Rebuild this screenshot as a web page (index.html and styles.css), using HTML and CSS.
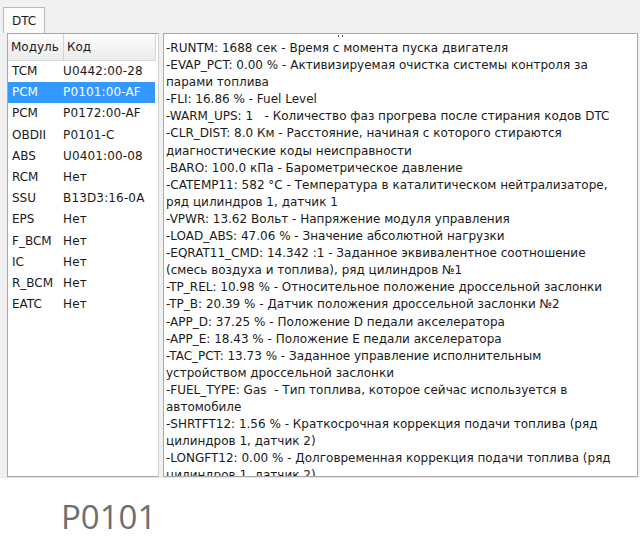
FILE: index.html
```html
<!DOCTYPE html>
<html lang="ru">
<head>
<meta charset="utf-8">
<title>DTC</title>
<link rel="stylesheet" href="styles.css">
</head>
<body>
<div class="window">
  <div class="tabs"><div class="tab">DTC</div></div>
  <div class="panes">
    <div class="list">
      <div class="list-head">
        <div class="col-mod">Модуль</div>
        <div class="col-code">Код</div>
      </div>
      <div class="row"><span class="c1">TCM</span><span class="c2">U0442:00-28</span></div>
      <div class="row selected"><span class="c1">PCM</span><span class="c2">P0101:00-AF</span></div>
      <div class="row"><span class="c1">PCM</span><span class="c2">P0172:00-AF</span></div>
      <div class="row"><span class="c1">OBDII</span><span class="c2">P0101-C</span></div>
      <div class="row"><span class="c1">ABS</span><span class="c2">U0401:00-08</span></div>
      <div class="row"><span class="c1">RCM</span><span class="c2">Нет</span></div>
      <div class="row"><span class="c1">SSU</span><span class="c2">B13D3:16-0A</span></div>
      <div class="row"><span class="c1">EPS</span><span class="c2">Нет</span></div>
      <div class="row"><span class="c1">F_BCM</span><span class="c2">Нет</span></div>
      <div class="row"><span class="c1">IC</span><span class="c2">Нет</span></div>
      <div class="row"><span class="c1">R_BCM</span><span class="c2">Нет</span></div>
      <div class="row"><span class="c1">EATC</span><span class="c2">Нет</span></div>
    </div>
    <div class="info">
      <div class="mark"><i></i><i></i></div>
      <div class="line">-RUNTM: 1688 сек - Время с момента пуска двигателя</div>
      <div class="line">-EVAP_PCT: 0.00 % - Активизируемая очистка системы контроля за<br>парами топлива</div>
      <div class="line">-FLI: 16.86 % - Fuel Level</div>
      <div class="line">-WARM_UPS: 1&nbsp;&nbsp;&nbsp;- Количество фаз прогрева после стирания кодов DTC</div>
      <div class="line">-CLR_DIST: 8.0 Км - Расстояние, начиная с которого стираются<br>диагностические коды неисправности</div>
      <div class="line">-BARO: 100.0 кПа - Барометрическое давление</div>
      <div class="line">-CATEMP11: 582 °C - Температура в каталитическом нейтрализаторе,<br>ряд цилиндров 1, датчик 1</div>
      <div class="line">-VPWR: 13.62 Вольт - Напряжение модуля управления</div>
      <div class="line">-LOAD_ABS: 47.06 % - Значение абсолютной нагрузки</div>
      <div class="line">-EQRAT11_CMD: 14.342 :1 - Заданное эквивалентное соотношение<br>(смесь воздуха и топлива), ряд цилиндров №1</div>
      <div class="line">-TP_REL: 10.98 % - Относительное положение дроссельной заслонки</div>
      <div class="line">-TP_B: 20.39 % - Датчик положения дроссельной заслонки №2</div>
      <div class="line">-APP_D: 37.25 % - Положение D педали акселератора</div>
      <div class="line">-APP_E: 18.43 % - Положение E педали акселератора</div>
      <div class="line">-TAC_PCT: 13.73 % - Заданное управление исполнительным<br>устройством дроссельной заслонки</div>
      <div class="line">-FUEL_TYPE: Gas&nbsp;&nbsp;- Тип топлива, которое сейчас используется в<br>автомобиле</div>
      <div class="line">-SHRTFT12: 1.56 % - Краткосрочная коррекция подачи топлива (ряд<br>цилиндров 1, датчик 2)</div>
      <div class="line">-LONGFT12: 0.00 % - Долговременная коррекция подачи топлива (ряд<br>цилиндров 1, датчик 2)</div>
    </div>
  </div>
</div>
<div class="caption">P0101</div>
</body>
</html>
```
FILE: styles.css
```css
html, body {
  margin: 0;
  padding: 0;
  background: #ffffff;
}
body {
  width: 640px;
  height: 550px;
  overflow: hidden;
  font-family: Tahoma, "DejaVu Sans", sans-serif;
  color: #1a1a1a;
}
.window {
  background: #f1f1f1;
  height: 478px;
  padding-top: 6px;
  box-sizing: border-box;
  border-bottom: 1px solid #e6e6e6;
}
.tabs {
  height: 27px;
  padding-left: 3px;
  display: flex;
  align-items: flex-end;
}
.tab {
  height: 26px;
  box-sizing: border-box;
  padding: 6px 8px 0 8px;
  background: #fbfbfb;
  border: 1px solid #b9b9b9;
  border-bottom: none;
  font-size: 12px;
}
.panes {
  display: flex;
  gap: 4px;
  padding: 0 2px 0 7px;
  height: 444px;
}
.list {
  width: 152px;
  flex: none;
  background: #fff;
  border: 1px solid #a9a9a9;
  border-right-color: #d0d0d0;
  box-sizing: border-box;
  font-size: 12px;
}
.list-head {
  display: flex;
  height: 26px;
  margin-right: 2px;
  background: linear-gradient(#fcfcfc, #ececec);
  border-bottom: 1px solid #d5d5d5;
}
.col-mod {
  width: 52px;
  padding-left: 3px;
  line-height: 26px;
  border-right: 1px solid #d5d5d5;
}
.col-code {
  flex: 1;
  padding-left: 3px;
  line-height: 26px;
  border-right: 1px solid #d5d5d5;
}
.row {
  display: flex;
  height: 21.2px;
  line-height: 21.2px;
  margin-right: 3px;
}
.row .c1 {
  width: 51px;
  padding-left: 4px;
  flex: none;
}
.row .c2 {
  padding-left: 0;
  white-space: nowrap;
  letter-spacing: 0.15px;
}
.row.selected {
  background: #3399ff;
  color: #fff;
}
.info {
  flex: 1;
  position: relative;
  background: #fff;
  border: 1px solid #a9a9a9;
  box-sizing: border-box;
  padding: 6px 0 0 2px;
  overflow: hidden;
  font-size: 12px;
  line-height: 17.1px;
}
.mark {
  position: absolute;
  left: 174px;
  top: 1px;
  display: flex;
  gap: 3px;
}
.mark i {
  display: block;
  width: 1px;
  height: 2px;
  background: #444;
}
.line {
  white-space: nowrap;
}
.caption {
  padding: 22px 0 0 61px;
  font-family: "Open Sans", sans-serif;
  font-size: 33px;
  color: #6e6e6e;
  line-height: 33px;
}
```
